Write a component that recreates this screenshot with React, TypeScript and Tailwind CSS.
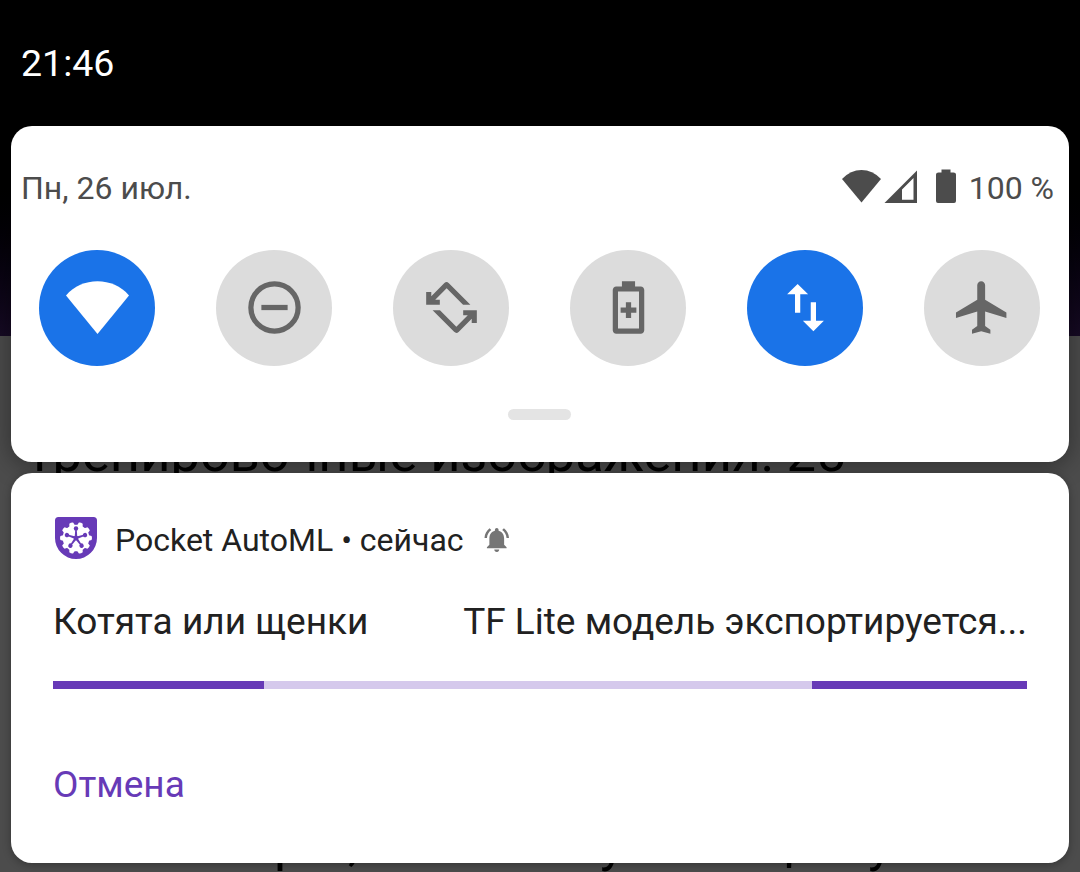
import type { ReactNode } from "react";

function Glyph({ children }: { children: ReactNode }) {
  return (
    <svg viewBox="0 0 24 24" className="mb-px size-[63px] shrink-0" fill="currentColor">
      {children}
    </svg>
  );
}

const ROTATE = "M19.2 10.95H16.4L10.15 4.7 5.8 9.05h1.75v1.9H2.35V6.1H4.3V7.7L9.3 2.65Q10.15 1.95 11 2.75Z";

const tiles: { name: string; on: boolean; icon: ReactNode }[] = [
  { name: "wifi", on: true, icon: <path d="M0 7.4C3.1 3.8 7.4 2 12 2s8.900 1.800 12 5.400L12 22.100z" /> },
  {
    name: "dnd",
    on: false,
    icon: (
      <>
        <circle cx="12" cy="12" r="9" fill="none" stroke="currentColor" strokeWidth="2" />
        <path d="M7 11h10v2H7z" />
      </>
    ),
  },
  {
    name: "rotate",
    on: false,
    icon: (
      <>
        <path d={ROTATE} />
        <path d={ROTATE} transform="rotate(180 12 12)" />
      </>
    ),
  },
  {
    name: "saver",
    on: false,
    icon: (
      <path
        fillRule="evenodd"
        d="M9.500 2h5v2h2.170c.73 0 1.330.6 1.330 1.330v15.340c0 .73-.6 1.330-1.330 1.330H7.330C6.600 22 6 21.400 6 20.670V5.330C6 4.600 6.600 4 7.330 4H9.500zM8 5.900v14.100h8V5.900zM11 10h2v2h2v2h-2v2h-2v-2H9v-2h2z"
      />
    ),
  },
  {
    name: "data",
    on: true,
    icon: <path d="M16 17.010V10h-2v7.010h-3L15 21l4-3.990h-3zM9 3L5 6.990h3V14h2V6.990h3L9 3z" />,
  },
  {
    name: "airplane",
    on: false,
    icon: (
      <path d="M21.100 16v-2.100L13 9V3.500c0-.83-.67-1.500-1.500-1.500S10 2.670 10 3.500V9l-8.100 4.900V16l8.100-2.500V19l-2 1.500V22l3.500-1 3.500 1v-1.500L13 19v-5.500z" />
    ),
  },
];

function AppLogo() {
  const nodes = [0, 72, 144, 216, 288];
  const teeth = [18, 54, 90, 126, 162, 198, 234, 270, 306, 342];
  return (
    <svg viewBox="0 0 42 42" className="size-[42px] shrink-0">
      <path d="M3.500 0h35A3.500 3.500 0 0 1 42 3.500V21a21 21 0 0 1-42 0V3.500A3.500 3.500 0 0 1 3.500 0z" fill="#673ab7" />
      <g fill="#fff">
        <circle cx="21" cy="21" r="13.300" />
        {teeth.map((a) => (
          <path key={a} d="M17.700 10l1.300-4.600q2-.8 4 0l1.300 4.600z" transform={`rotate(${a} 21 21)`} />
        ))}
      </g>
      <g fill="#673ab7">
        {nodes.map((a) => (
          <g key={a} transform={`rotate(${a} 21 21)`}>
            <circle cx="21" cy="11.500" r="2.200" />
            <path d="M20.400 11h1.200l.8 10h-2.800z" />
          </g>
        ))}
        <circle cx="21" cy="21" r="2.300" />
      </g>
    </svg>
  );
}

export default function App() {
  return (
    <div className="relative h-[872px] w-[1080px] overflow-hidden bg-black font-['Roboto','Noto_Sans',sans-serif]">
      {/* dimmed application behind the notification shade */}
      <div className="absolute inset-0 flex flex-col text-black">
        <div className="h-[336px] shrink-0 bg-linear-to-b from-black from-40% to-[#160a24]" />
        <div className="relative flex-1 bg-[#4c4c4c]">
          <span className="absolute left-[24px] top-[87px] whitespace-nowrap text-[52.5px] leading-[60px]">
            Тренировочные изображения: 25
          </span>
          <div className="absolute left-0 top-[476px] text-[52.5px] leading-[60px]">
            <span className="absolute left-[274px]">р</span>
            <span className="absolute left-[348px]">,</span>
            <span className="absolute left-[600px]">у</span>
            <span className="absolute left-[762px]">ц</span>
            <span className="absolute left-[868px]">у</span>
          </div>
        </div>
      </div>

      <div className="relative flex h-full flex-col px-[11px]">
        <div className="flex h-[126px] shrink-0 items-center pl-[10px] text-[37.500px] text-white">
          <span className="leading-[44px]">21:46</span>
        </div>

        <section className="flex h-[336px] shrink-0 flex-col rounded-[21px] bg-white shadow-[0_3px_26px_rgba(0,0,0,0.4)]">
          <div className="mt-[42px] flex h-10 items-center justify-between pl-[10px] pr-[15px] text-[32px] text-[#4c4c4c]">
            <span>Пн, 26 июл.</span>
            <div className="flex items-center">
              <svg viewBox="0 0 116 34" className="mr-[11px] mb-[4px] h-[34px] w-[116px]" fill="#4c4c4c">
                <path d="M0 10Q8.500 1 19.500 1T39 10L19.500 33.500z" />
                <path fillRule="evenodd" d="M42.500 34L75 1.500V34zM60 20.500v10.300h11.500V9z" />
                <path d="M99.500 0.500h9v3h3q2.500 0 2.500 2V32q0 2-2 2H96q-2 0-2-2V5.500q0-2 2.500-2h3z" />
              </svg>
              <span>100 %</span>
            </div>
          </div>

          <div className="mt-[42px] flex justify-between pl-7 pr-[29px]">
            {tiles.map((t) => (
              <div
                key={t.name}
                className={`flex size-[116px] items-center justify-center rounded-full ${
                  t.on ? "bg-[#1a73e8] text-white" : "bg-[#dcdcdc] text-[#666666]"
                }`}
              >
                <Glyph>{t.icon}</Glyph>
              </div>
            ))}
          </div>
          <div className="mt-[43px] ml-[497px] h-[11px] w-[63px] rounded-full bg-[#e4e4e4]" />
        </section>

        <section className="mt-[11px] flex h-[390px] shrink-0 flex-col rounded-[21px] bg-white px-[42px] text-[#212121] shadow-[0_2px_8px_rgba(0,0,0,0.3)]">
          <header className="mt-[44px] ml-[2px] flex h-[42px] items-center text-[32px]">
            <AppLogo />
            <span className="ml-[18px] mt-[3px] whitespace-nowrap">Pocket AutoML • сейчас</span>
            <svg viewBox="0 0 24 24" className="mt-[3px] ml-[18px] size-[29.500px]" fill="#757575">
              <path d="M7.580 4.080L6.150 2.650C3.750 4.480 2.170 7.300 2.030 10.500h2c.15-2.650 1.510-4.970 3.550-6.420zm12.390 6.420h2c-.15-3.200-1.730-6.020-4.120-7.850l-1.420 1.430c2.020 1.450 3.390 3.770 3.540 6.420zM18 11c0-3.070-1.640-5.640-4.500-6.320V4c0-.83-.67-1.500-1.500-1.500s-1.500.67-1.500 1.500v.68C7.630 5.360 6 7.920 6 11v5l-2 2v1h16v-1l-2-2v-5zm-6 11c.14 0 .27-.01.4-.04.65-.14 1.180-.58 1.440-1.180.1-.24.15-.5.15-.78h-4c.01 1.100.9 2 2.010 2z" />
            </svg>
          </header>

          <div className="mt-[40px] flex h-[46px] items-center justify-between whitespace-nowrap text-[37px]">
            <span>Котята или щенки</span>
            <span>TF Lite модель экспортируется...</span>
          </div>

          <div className="mt-[36px] flex h-2 justify-between bg-[#d5c9ec]">
            <div className="w-[211px] bg-[#673ab7]" />
            <div className="w-[215px] bg-[#673ab7]" />
          </div>

          <button className="mt-[73px] self-start text-[37px] leading-[46px] text-[#673ab7]">Отмена</button>
        </section>
      </div>
    </div>
  );
}
